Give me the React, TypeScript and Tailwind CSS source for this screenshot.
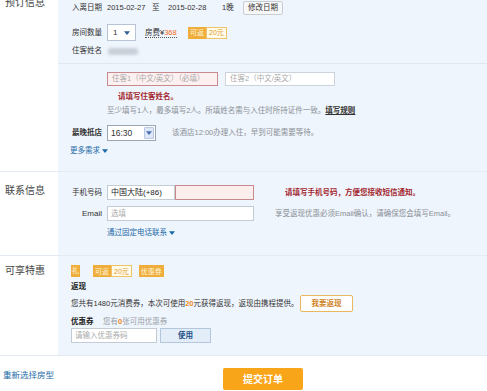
import React from 'react'

const font = { fontFamily: '"Liberation Sans", "Noto Sans CJK SC", sans-serif' }

function Caret({ className = '' }: { className?: string }) {
  return (
    <svg viewBox="0 0 8 5" className={`w-[6px] h-[4px] ${className}`}>
      <path d="M0 0h8L4 5z" fill="currentColor" />
    </svg>
  )
}

function Badge({ left, right }: { left: string; right?: string }) {
  return (
    <span className="inline-flex h-[12px] items-stretch text-[7px] leading-none">
      <span className="flex items-center px-[2px] bg-[#efae3c] text-[#fff6df]">{left}</span>
      {right && (
        <span className="flex items-center px-[2px] bg-[#fffbea] border border-[#f0c36a] text-[#e29a2a]">{right}</span>
      )}
    </span>
  )
}

function SideLabel({ children }: { children: React.ReactNode }) {
  return <div className="w-[58px] shrink-0 bg-white pl-[5px] text-[10px] text-[#444]">{children}</div>
}

export default function App() {
  return (
    <div className="w-[487px] h-[391px] overflow-hidden bg-white text-[7.5px] text-[#333]" style={font}>
      {/* 预订信息 */}
      <div className="flex h-[172px] border-b border-[#e4eaf1]">
        <SideLabel>
          <div className="-mt-[4px] leading-[14px]">预订信息</div>
        </SideLabel>
        <div className="flex-1 bg-[#eff5fc]">
          <div className="mt-[1px] flex h-[14px] items-center pl-[14px]">
            <span className="w-[35px]">入离日期</span>
            <span className="w-[45px]">2015-02-27</span>
            <span className="w-[16px]">至</span>
            <span className="w-[54px]">2015-02-28</span>
            <span className="w-[21px]">1晚</span>
            <span className="flex h-[14px] w-[40px] items-center justify-center rounded-[2px] border border-[#c9ced4] bg-[#f7f7f7]">修改日期</span>
          </div>
          <div className="mt-[9px] flex h-[17px] items-center pl-[14px]">
            <span className="w-[35px]">房间数量</span>
            <span className="flex h-[17px] w-[29px] items-center justify-between border border-[#b7c4d3] bg-white px-[5px] text-[8px]">
              1<Caret className="text-[#2d5f95]" />
            </span>
            <span className="ml-[9px] w-[43px]">
              <span className="border-b border-dotted border-[#555]">房费¥<span className="text-[#f26c22]">368</span></span>
            </span>
            <Badge left="可返" right="20元" />
          </div>
          <div className="mt-[3px] flex h-[14px] items-center pl-[14px]">
            <span className="w-[36px]">住客姓名</span>
            <span className="h-[7px] w-[30px] rounded-[3px] bg-[#c9cfd8] blur-[1.5px]" />
          </div>
          <div className="mt-[5px] border-t border-[#dfe7f0]" />
          <div className="mt-[8px] flex h-[14px] items-stretch pl-[49px]">
            <span className="flex w-[111px] items-center border border-[#c98a8f] bg-[#fdf0f0] pl-[4px] text-[#aaa]">住客1（中文/英文）（必填）</span>
            <span className="ml-[7px] flex w-[110px] items-center border border-[#ccd3db] bg-white pl-[4px] text-[#aaa]">住客2（中文/英文）</span>
          </div>
          <div className="mt-[4px] flex h-[14px] items-center pl-[60px] font-bold text-[#a3272f]">请填写住客姓名。</div>
          <div className="flex h-[14px] items-center pl-[49px] text-[#8a8f96]">
            至少填写1人，最多填写2人。所填姓名需与入住时所持证件一致。<span className="font-bold text-[#333] underline">填写规则</span>
          </div>
          <div className="mt-[7px] flex h-[16px] items-center pl-[14px]">
            <span className="w-[35px] font-bold">最晚抵店</span>
            <span className="flex h-[16px] w-[49px] items-center justify-between border border-[#9aa6b4] bg-white pl-[3px] pr-[1px] text-[8.5px]">
              16:30
              <span className="flex h-[12px] w-[10px] items-center justify-center rounded-[1px] border border-[#b8c9e6] bg-[#dde7f7]">
                <Caret className="text-[#4b6fae]" />
              </span>
            </span>
            <span className="ml-[16px] text-[#8a8f96]">该酒店12:00办理入住，早到可能需要等待。</span>
          </div>
          <div className="mt-[3px] flex h-[14px] items-center gap-[2px] pl-[12px] text-[#1b6aa8]">
            更多需求<Caret className="text-[#1b6aa8]" />
          </div>
        </div>
      </div>

      {/* 联系信息 */}
      <div className="flex h-[84px] border-b border-[#e4eaf1]">
        <SideLabel>
          <div className="mt-[12px] leading-[14px]">联系信息</div>
        </SideLabel>
        <div className="flex-1 bg-[#eff5fc]">
          <div className="mt-[13px] flex h-[15px] items-stretch pl-[14px]">
            <span className="flex w-[35px] items-center">手机号码</span>
            <span className="flex w-[68px] items-center border border-[#c3cbd4] bg-white pl-[3px] text-[8px] text-[#222]">中国大陆(+86)</span>
            <span className="w-[79px] border border-[#c98a8f] bg-[#fdeeee]" />
            <span className="ml-[31px] flex items-center font-bold text-[#a3272f]">请填写手机号码，方便您接收短信通知。</span>
          </div>
          <div className="mt-[6px] flex h-[15px] items-stretch pl-[14px]">
            <span className="flex w-[30px] items-center justify-end text-[8px]">Email</span>
            <span className="ml-[5px] flex w-[147px] items-center border border-[#c3cbd4] bg-white pl-[3px] text-[#aaa]">选填</span>
            <span className="ml-[21px] flex items-center text-[#8a8f96]">享受返现优惠必须Email确认，请确保您会填写Email。</span>
          </div>
          <div className="mt-[5px] flex h-[14px] items-center gap-[2px] pl-[49px] text-[#1b6aa8]">
            通过固定电话联系<Caret className="text-[#1b6aa8]" />
          </div>
        </div>
      </div>

      {/* 可享特惠 */}
      <div className="flex h-[100px] border-b border-[#e4eaf1]">
        <SideLabel>
          <div className="mt-[8px] leading-[14px]">可享特惠</div>
        </SideLabel>
        <div className="flex-1 bg-[#eff5fc]">
          <div className="mt-[9px] flex h-[12px] items-center pl-[13px]">
            <span className="flex h-[12px] w-[9px] items-center justify-center bg-[#efae3c] text-[7px] text-[#fff6df]">礼</span>
            <span className="ml-[13px]"><Badge left="可返" right="20元" /></span>
            <span className="ml-[7px]"><Badge left="优惠券" /></span>
          </div>
          <div className="mt-[3px] flex h-[14px] items-center pl-[13px] font-bold text-[#222]">返现</div>
          <div className="mt-[1px] flex h-[17px] items-center pl-[13px]">
            <span className="w-[229px]">
              您共有1480元消费券，本次可使用<span className="font-bold text-[#f08a1c]">20</span>元获得返现，返现由携程提供。
            </span>
            <span className="flex h-[17px] w-[53px] items-center justify-center rounded-[2px] border border-[#e9b760] bg-white font-bold text-[#d0852a]">我要返现</span>
          </div>
          <div className="mt-[4px] flex h-[12px] items-center pl-[13px]">
            <span className="w-[32px] font-bold text-[#222]">优惠券</span>
            <span className="text-[#9aa0a8]">您有<span className="font-bold text-[#f08a1c]">0</span>张可用优惠券</span>
          </div>
          <div className="flex h-[15px] items-stretch pl-[13px]">
            <span className="flex w-[86px] items-center border border-[#c3cbd4] bg-white pl-[3px] text-[#aaa]">请输入优惠券码</span>
            <span className="ml-[3px] flex w-[51px] items-center justify-center border border-[#b3c6dc] bg-[#e3edf8] font-bold text-[#1c4f86]">使用</span>
          </div>
        </div>
      </div>

      {/* footer */}
      <div className="flex h-[35px] items-center pl-[3px]">
        <span className="w-[220px] pt-[3px] text-[8.5px] text-[#1b6aa8]">重新选择房型</span>
        <span className="mt-[11px] flex h-[22px] w-[80px] items-center justify-center rounded-[2px] bg-[#f9a519] text-[10px] font-bold text-white">提交订单</span>
      </div>
    </div>
  )
}
